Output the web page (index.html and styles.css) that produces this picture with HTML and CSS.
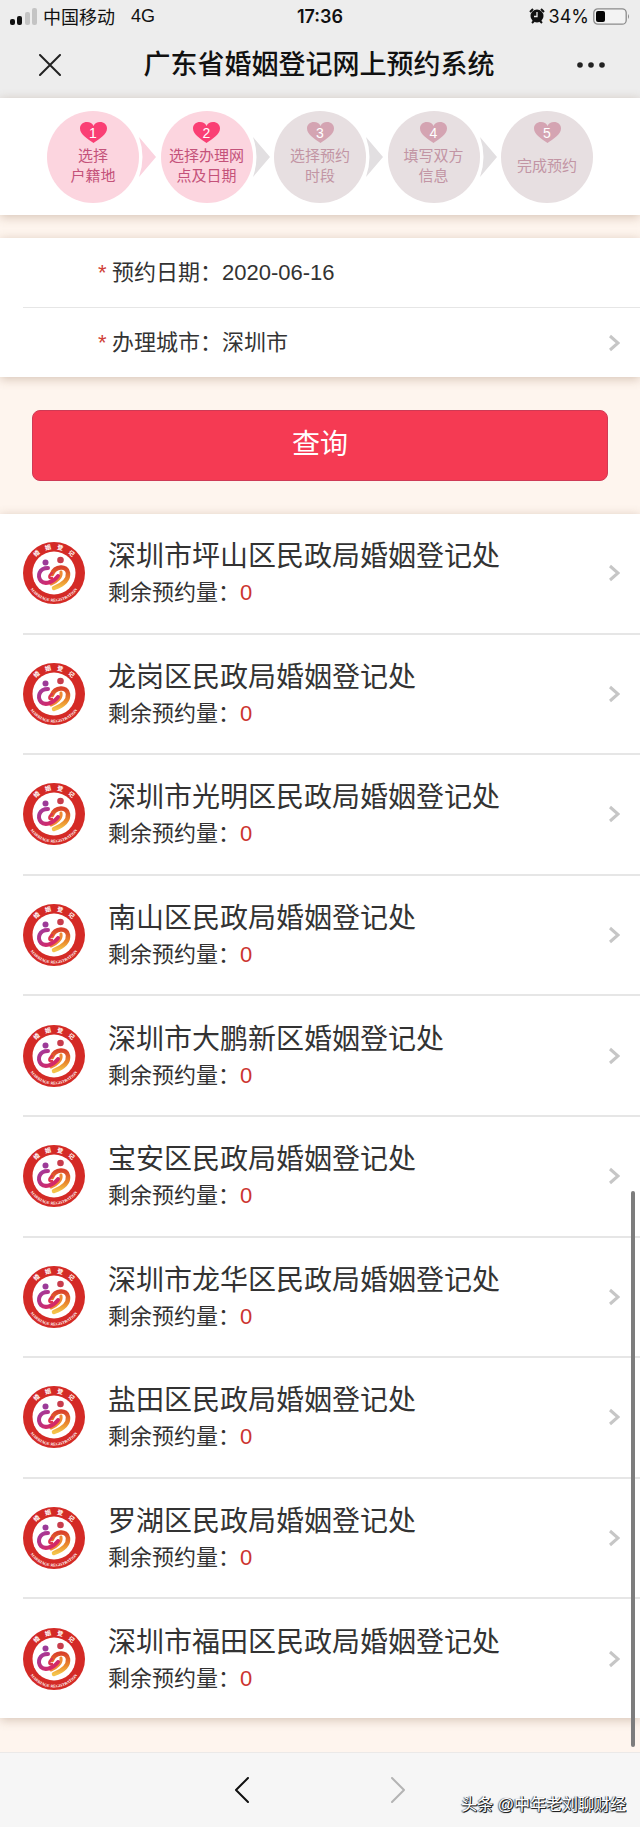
FILE: index.html
```html
<!DOCTYPE html>
<html lang="zh-CN">
<head>
<meta charset="utf-8">
<meta name="viewport" content="width=device-width, initial-scale=1">
<title>广东省婚姻登记网上预约系统</title>
<link rel="stylesheet" href="styles.css">
</head>
<body>
<svg class="defs" aria-hidden="true">
  <defs>
    <linearGradient id="purple" x1="0" y1="0" x2="1" y2="1"><stop offset="0" stop-color="#a03a9c"/><stop offset="1" stop-color="#e0245c"/></linearGradient>
    <linearGradient id="orange" x1="0" y1="0" x2="0" y2="1"><stop offset="0" stop-color="#d9412a"/><stop offset=".6" stop-color="#ea8a2c"/><stop offset="1" stop-color="#f4c34a"/></linearGradient>
    <path id="arc-top" d="M7 31 A24 24 0 0 1 55 31"/>
    <path id="arc-bottom" d="M2.500 31 A28.500 28.500 0 0 0 59.500 31"/>
  </defs>
  <symbol id="emblem" viewBox="0 0 62 62">
    <circle cx="31" cy="31" r="31" fill="#d42a26"/>
    <circle cx="31" cy="31" r="21.500" fill="#fff"/>
    <text class="seal-cn"><textPath href="#arc-top" startOffset="50%" text-anchor="middle">婚&#160;&#160;&#160;&#160;姻&#160;&#160;&#160;&#160;登&#160;&#160;&#160;&#160;记</textPath></text>
    <text class="seal-en"><textPath href="#arc-bottom" startOffset="50%" text-anchor="middle">MARRIAGE REGISTRATION</textPath></text>
    <circle cx="22.500" cy="20.500" r="3" fill="#9c3a98"/>
    <circle cx="37.500" cy="18" r="3.300" fill="#c73c4c"/>
    <path d="M29 32 C32 24 44 23 45 31 C46 39 39 43 31 46" fill="none" stroke="url(#orange)" stroke-width="4.500" stroke-linecap="round"/>
    <path d="M38 30 C39 35 34 40 28 42" fill="none" stroke="#ee8a35" stroke-width="3" stroke-linecap="round"/>
    <path d="M25 26 C16 26 14 34 18 39 C22 43 31 40 35 34" fill="none" stroke="url(#purple)" stroke-width="4" stroke-linecap="round"/>
    <path d="M29 31 C25 34 26 37 29 36" fill="none" stroke="#dc3350" stroke-width="2.500" stroke-linecap="round"/>
  </symbol>
  <symbol id="heart" viewBox="0 0 27 21"><path d="M13.500 21 C8 17 0 12.500 0 6.500 C0 2.500 3 0 7 0 C10 0 12.500 1.500 13.500 4 C14.500 1.500 17 0 20 0 C24 0 27 2.500 27 6.500 C27 12.500 19 17 13.500 21Z" fill="currentColor"/></symbol>
  <symbol id="arrow" viewBox="0 0 17 40"><path d="M0 0 L17 20 L0 40 Q7 20 0 0Z" fill="currentColor"/></symbol>
  <symbol id="chevron" viewBox="0 0 12 18"><path d="M2 2 L10 9 L2 16" fill="none" stroke="currentColor" stroke-width="3"/></symbol>
</svg>

<header class="top">
  <div class="status">
    <div class="carrier">
      <svg width="27" height="17" viewBox="0 0 27 17" aria-hidden="true"><rect x="0" y="11" width="5" height="6" rx="2" fill="#111"/><rect x="7" y="8" width="5" height="9" rx="2" fill="#111"/><rect x="15" y="4" width="5" height="13" rx="2" fill="#c4c4c4"/><rect x="22" y="0" width="5" height="17" rx="2" fill="#c4c4c4"/></svg>
      <span>中国移动</span><span class="network">4G</span>
    </div>
    <time class="clock">17:36</time>
    <div class="power">
      <svg width="16" height="16" viewBox="0 0 16 16" aria-hidden="true"><circle cx="8" cy="8" r="6.500" fill="#111"/><path d="M1 4 L4 1 M15 4 L12 1 M3 15 L5 13 M13 15 L11 13" stroke="#111" stroke-width="2"/><path d="M8 4 V8.500 H5" fill="none" stroke="#ededed" stroke-width="1.300"/></svg>
      <span>34%</span>
      <svg width="37" height="17" viewBox="0 0 37 17" aria-hidden="true"><rect x=".8" y=".8" width="32.400" height="15.400" rx="4" fill="#f3f3f3" stroke="#8b8b8b" stroke-width="1.300"/><rect x="3" y="3" width="9" height="11" rx="2" fill="#050505"/><path d="M35 6 Q37 8.500 35 11Z" fill="#8b8b8b"/></svg>
    </div>
  </div>
  <div class="nav">
    <button class="icon-button" aria-label="关闭"><svg width="22" height="22" viewBox="0 0 22 22"><path d="M1 1 L21 21 M21 1 L1 21" stroke="#222" stroke-width="2" stroke-linecap="round"/></svg></button>
    <h1>广东省婚姻登记网上预约系统</h1>
    <button class="icon-button" aria-label="更多"><svg width="28" height="6" viewBox="0 0 28 6"><g fill="#222"><circle cx="3" cy="3" r="2.800"/><circle cx="14" cy="3" r="2.800"/><circle cx="25" cy="3" r="2.800"/></g></svg></button>
  </div>
</header>

<main>
  <ol class="card steps">
    <li class="step active"><span class="num"><svg width="27" height="21"><use href="#heart"/></svg><b>1</b></span><span class="label">选择<br>户籍地</span></li>
    <li class="link pink" aria-hidden="true"><svg width="17" height="40"><use href="#arrow"/></svg></li>
    <li class="step active"><span class="num"><svg width="27" height="21"><use href="#heart"/></svg><b>2</b></span><span class="label">选择办理网<br>点及日期</span></li>
    <li class="link" aria-hidden="true"><svg width="17" height="40"><use href="#arrow"/></svg></li>
    <li class="step"><span class="num"><svg width="27" height="21"><use href="#heart"/></svg><b>3</b></span><span class="label">选择预约<br>时段</span></li>
    <li class="link" aria-hidden="true"><svg width="17" height="40"><use href="#arrow"/></svg></li>
    <li class="step"><span class="num"><svg width="27" height="21"><use href="#heart"/></svg><b>4</b></span><span class="label">填写双方<br>信息</span></li>
    <li class="link" aria-hidden="true"><svg width="17" height="40"><use href="#arrow"/></svg></li>
    <li class="step"><span class="num"><svg width="27" height="21"><use href="#heart"/></svg><b>5</b></span><span class="label">完成预约</span></li>
  </ol>

  <form class="query">
    <div class="card fields">
      <div class="field"><label for="date"><i>*</i>预约日期：</label><input id="date" type="text" value="2020-06-16" readonly></div>
      <div class="field"><label for="city"><i>*</i>办理城市：</label><select id="city"><option>深圳市</option></select><svg class="chevron" width="12" height="18"><use href="#chevron"/></svg></div>
    </div>
    <button class="submit" type="button">查询</button>
  </form>

  <ul class="card offices">
    <li><a href="#"><svg class="emblem" width="62" height="62"><use href="#emblem"/></svg><span class="office"><strong>深圳市坪山区民政局婚姻登记处</strong><small>剩余预约量：<em>0</em></small></span><svg class="chevron" width="12" height="18"><use href="#chevron"/></svg></a></li>
    <li><a href="#"><svg class="emblem" width="62" height="62"><use href="#emblem"/></svg><span class="office"><strong>龙岗区民政局婚姻登记处</strong><small>剩余预约量：<em>0</em></small></span><svg class="chevron" width="12" height="18"><use href="#chevron"/></svg></a></li>
    <li><a href="#"><svg class="emblem" width="62" height="62"><use href="#emblem"/></svg><span class="office"><strong>深圳市光明区民政局婚姻登记处</strong><small>剩余预约量：<em>0</em></small></span><svg class="chevron" width="12" height="18"><use href="#chevron"/></svg></a></li>
    <li><a href="#"><svg class="emblem" width="62" height="62"><use href="#emblem"/></svg><span class="office"><strong>南山区民政局婚姻登记处</strong><small>剩余预约量：<em>0</em></small></span><svg class="chevron" width="12" height="18"><use href="#chevron"/></svg></a></li>
    <li><a href="#"><svg class="emblem" width="62" height="62"><use href="#emblem"/></svg><span class="office"><strong>深圳市大鹏新区婚姻登记处</strong><small>剩余预约量：<em>0</em></small></span><svg class="chevron" width="12" height="18"><use href="#chevron"/></svg></a></li>
    <li><a href="#"><svg class="emblem" width="62" height="62"><use href="#emblem"/></svg><span class="office"><strong>宝安区民政局婚姻登记处</strong><small>剩余预约量：<em>0</em></small></span><svg class="chevron" width="12" height="18"><use href="#chevron"/></svg></a></li>
    <li><a href="#"><svg class="emblem" width="62" height="62"><use href="#emblem"/></svg><span class="office"><strong>深圳市龙华区民政局婚姻登记处</strong><small>剩余预约量：<em>0</em></small></span><svg class="chevron" width="12" height="18"><use href="#chevron"/></svg></a></li>
    <li><a href="#"><svg class="emblem" width="62" height="62"><use href="#emblem"/></svg><span class="office"><strong>盐田区民政局婚姻登记处</strong><small>剩余预约量：<em>0</em></small></span><svg class="chevron" width="12" height="18"><use href="#chevron"/></svg></a></li>
    <li><a href="#"><svg class="emblem" width="62" height="62"><use href="#emblem"/></svg><span class="office"><strong>罗湖区民政局婚姻登记处</strong><small>剩余预约量：<em>0</em></small></span><svg class="chevron" width="12" height="18"><use href="#chevron"/></svg></a></li>
    <li><a href="#"><svg class="emblem" width="62" height="62"><use href="#emblem"/></svg><span class="office"><strong>深圳市福田区民政局婚姻登记处</strong><small>剩余预约量：<em>0</em></small></span><svg class="chevron" width="12" height="18"><use href="#chevron"/></svg></a></li>
  </ul>
  <div class="scroll-thumb"></div>
</main>

<footer class="toolbar">
  <button class="icon-button" aria-label="后退"><svg width="15" height="26" viewBox="0 0 15 26"><path d="M14 1 L2 13 L14 25" fill="none" stroke="#111" stroke-width="2" stroke-linecap="round" stroke-linejoin="round"/></svg></button>
  <button class="icon-button" aria-label="前进"><svg width="15" height="26" viewBox="0 0 15 26"><path d="M1 1 L13 13 L1 25" fill="none" stroke="#b4b4b4" stroke-width="2" stroke-linecap="round" stroke-linejoin="round"/></svg></button>
  <span class="credit">头条 @中年老刘聊财经</span>
</footer>
</body>
</html>
```
FILE: styles.css
```css
* { box-sizing: border-box; }
body {
  margin: 0;
  min-height: 100vh;
  display: flex;
  flex-direction: column;
  background: #fef5ee;
  color: #333;
  font-family: "Liberation Sans", "Noto Sans CJK SC", sans-serif;
}
svg { display: block; flex: none; }
.defs { position: absolute; width: 62px; height: 62px; visibility: hidden; }
ol, ul { list-style: none; margin: 0; padding: 0; }
button, input, select { font: inherit; color: inherit; background: none; border: 0; padding: 0; margin: 0; }

/* Status bar and page title */
.top { background: #ededed; color: #111; }
.status {
  display: grid;
  grid-template-columns: 1fr auto 1fr;
  align-items: center;
  height: 32px;
  padding: 0 10px;
  font-size: 18px;
}
.carrier, .power { display: flex; align-items: center; }
.carrier { gap: 6px; }
.network { margin-left: 10px; }
.clock { font-family: Inter, sans-serif; font-weight: 600; }
.power { justify-content: flex-end; gap: 4px; font-family: Inter, sans-serif; }
.nav {
  display: flex;
  align-items: center;
  justify-content: space-between;
  height: 66px;
  padding: 0 35px 0 39px;
}
.nav h1 { margin: 0; font-size: 27px; font-weight: 500; line-height: 38px; }
.icon-button { cursor: pointer; }

main { position: relative; flex: 1; display: flex; flex-direction: column; padding-bottom: 34px; }
.card { background: #fff; box-shadow: 0 2px 10px rgba(120, 80, 50, .3); }

/* Progress */
.steps { display: flex; align-items: center; height: 117px; padding: 0 47px; }
.step {
  flex: none;
  display: flex;
  flex-direction: column;
  align-items: center;
  width: 92px;
  height: 92px;
  padding-top: 11px;
  border-radius: 50%;
  background: #e7dfe1;
  color: #c295a4;
}
.num { display: grid; color: #d4a4b2; }
.num > * { grid-area: 1 / 1; }
.num b { text-align: center; font-size: 14px; font-weight: 400; line-height: 23px; color: #fff; }
.label {
  flex: 1;
  display: flex;
  align-items: center;
  padding-bottom: 16px;
  text-align: center;
  white-space: nowrap;
  font-size: 15px;
  line-height: 20px;
}
.step.active { background: #fcd5df; color: #c4527a; }
.step.active .num { color: #fa3f74; }
.link { flex: 1; color: #e2dfe1; }
.link.pink { color: #fbd3df; }

/* Query form */
.fields { margin-top: 23px; padding-left: 23px; font-size: 22px; line-height: 32px; }
.field { display: flex; align-items: center; height: 69px; padding-right: 20px; }
.field + .field { height: 70px; border-top: 1px solid #e6e6e6; }
.field label { padding-left: 75px; white-space: nowrap; }
.field i { display: inline-block; width: 14px; color: #d04038; font-style: normal; }
.field input, .field select { flex: 1; min-width: 0; height: 32px; line-height: 32px; appearance: none; }
.submit {
  display: block;
  width: calc(100% - 64px);
  height: 71px;
  margin: 33px auto;
  padding-bottom: 2px;
  border: 1px solid #cf3a55;
  border-radius: 8px;
  background: #f53a53;
  color: #fff;
  font-size: 28px;
  line-height: 40px;
}
.chevron { color: #c6c6c6; }

/* Registration offices */
.offices { flex: 1; display: flex; flex-direction: column; padding-left: 23px; }
.offices li { flex: 1; display: flex; }
.offices li + li { border-top: 2px solid #e6e6e6; }
.offices a { flex: 1; display: flex; align-items: center; padding-right: 20px; color: inherit; text-decoration: none; }
.office { flex: 1; display: flex; flex-direction: column; padding-left: 23px; }
.office strong { font-size: 28px; font-weight: 400; line-height: 40px; }
.office small { font-size: 22px; line-height: 32px; }
.office em { color: #cc3430; font-style: normal; }
.seal-cn { font: 700 6px "Noto Sans CJK SC", sans-serif; fill: #fff; }
.seal-en { font: 700 4px "Liberation Serif", serif; fill: #fff; }
.scroll-thumb {
  position: absolute;
  right: 5px;
  bottom: 5px;
  width: 4px;
  height: 556px;
  border-radius: 2px;
  background: #7d7d7d;
}

/* Browser toolbar */
.toolbar {
  position: relative;
  display: flex;
  justify-content: center;
  align-items: center;
  gap: 142px;
  height: 75px;
  border-top: 1px solid #ebe9e8;
  background: #f6f6f6;
}
.credit {
  position: absolute;
  right: 14px;
  bottom: 10px;
  color: #fff;
  font-size: 16px;
  line-height: 24px;
  text-shadow: 1px 1px 0 #222, 1px 0 0 #222, 0 1px 1px #333, -1px 0 1px #777;
}
```
